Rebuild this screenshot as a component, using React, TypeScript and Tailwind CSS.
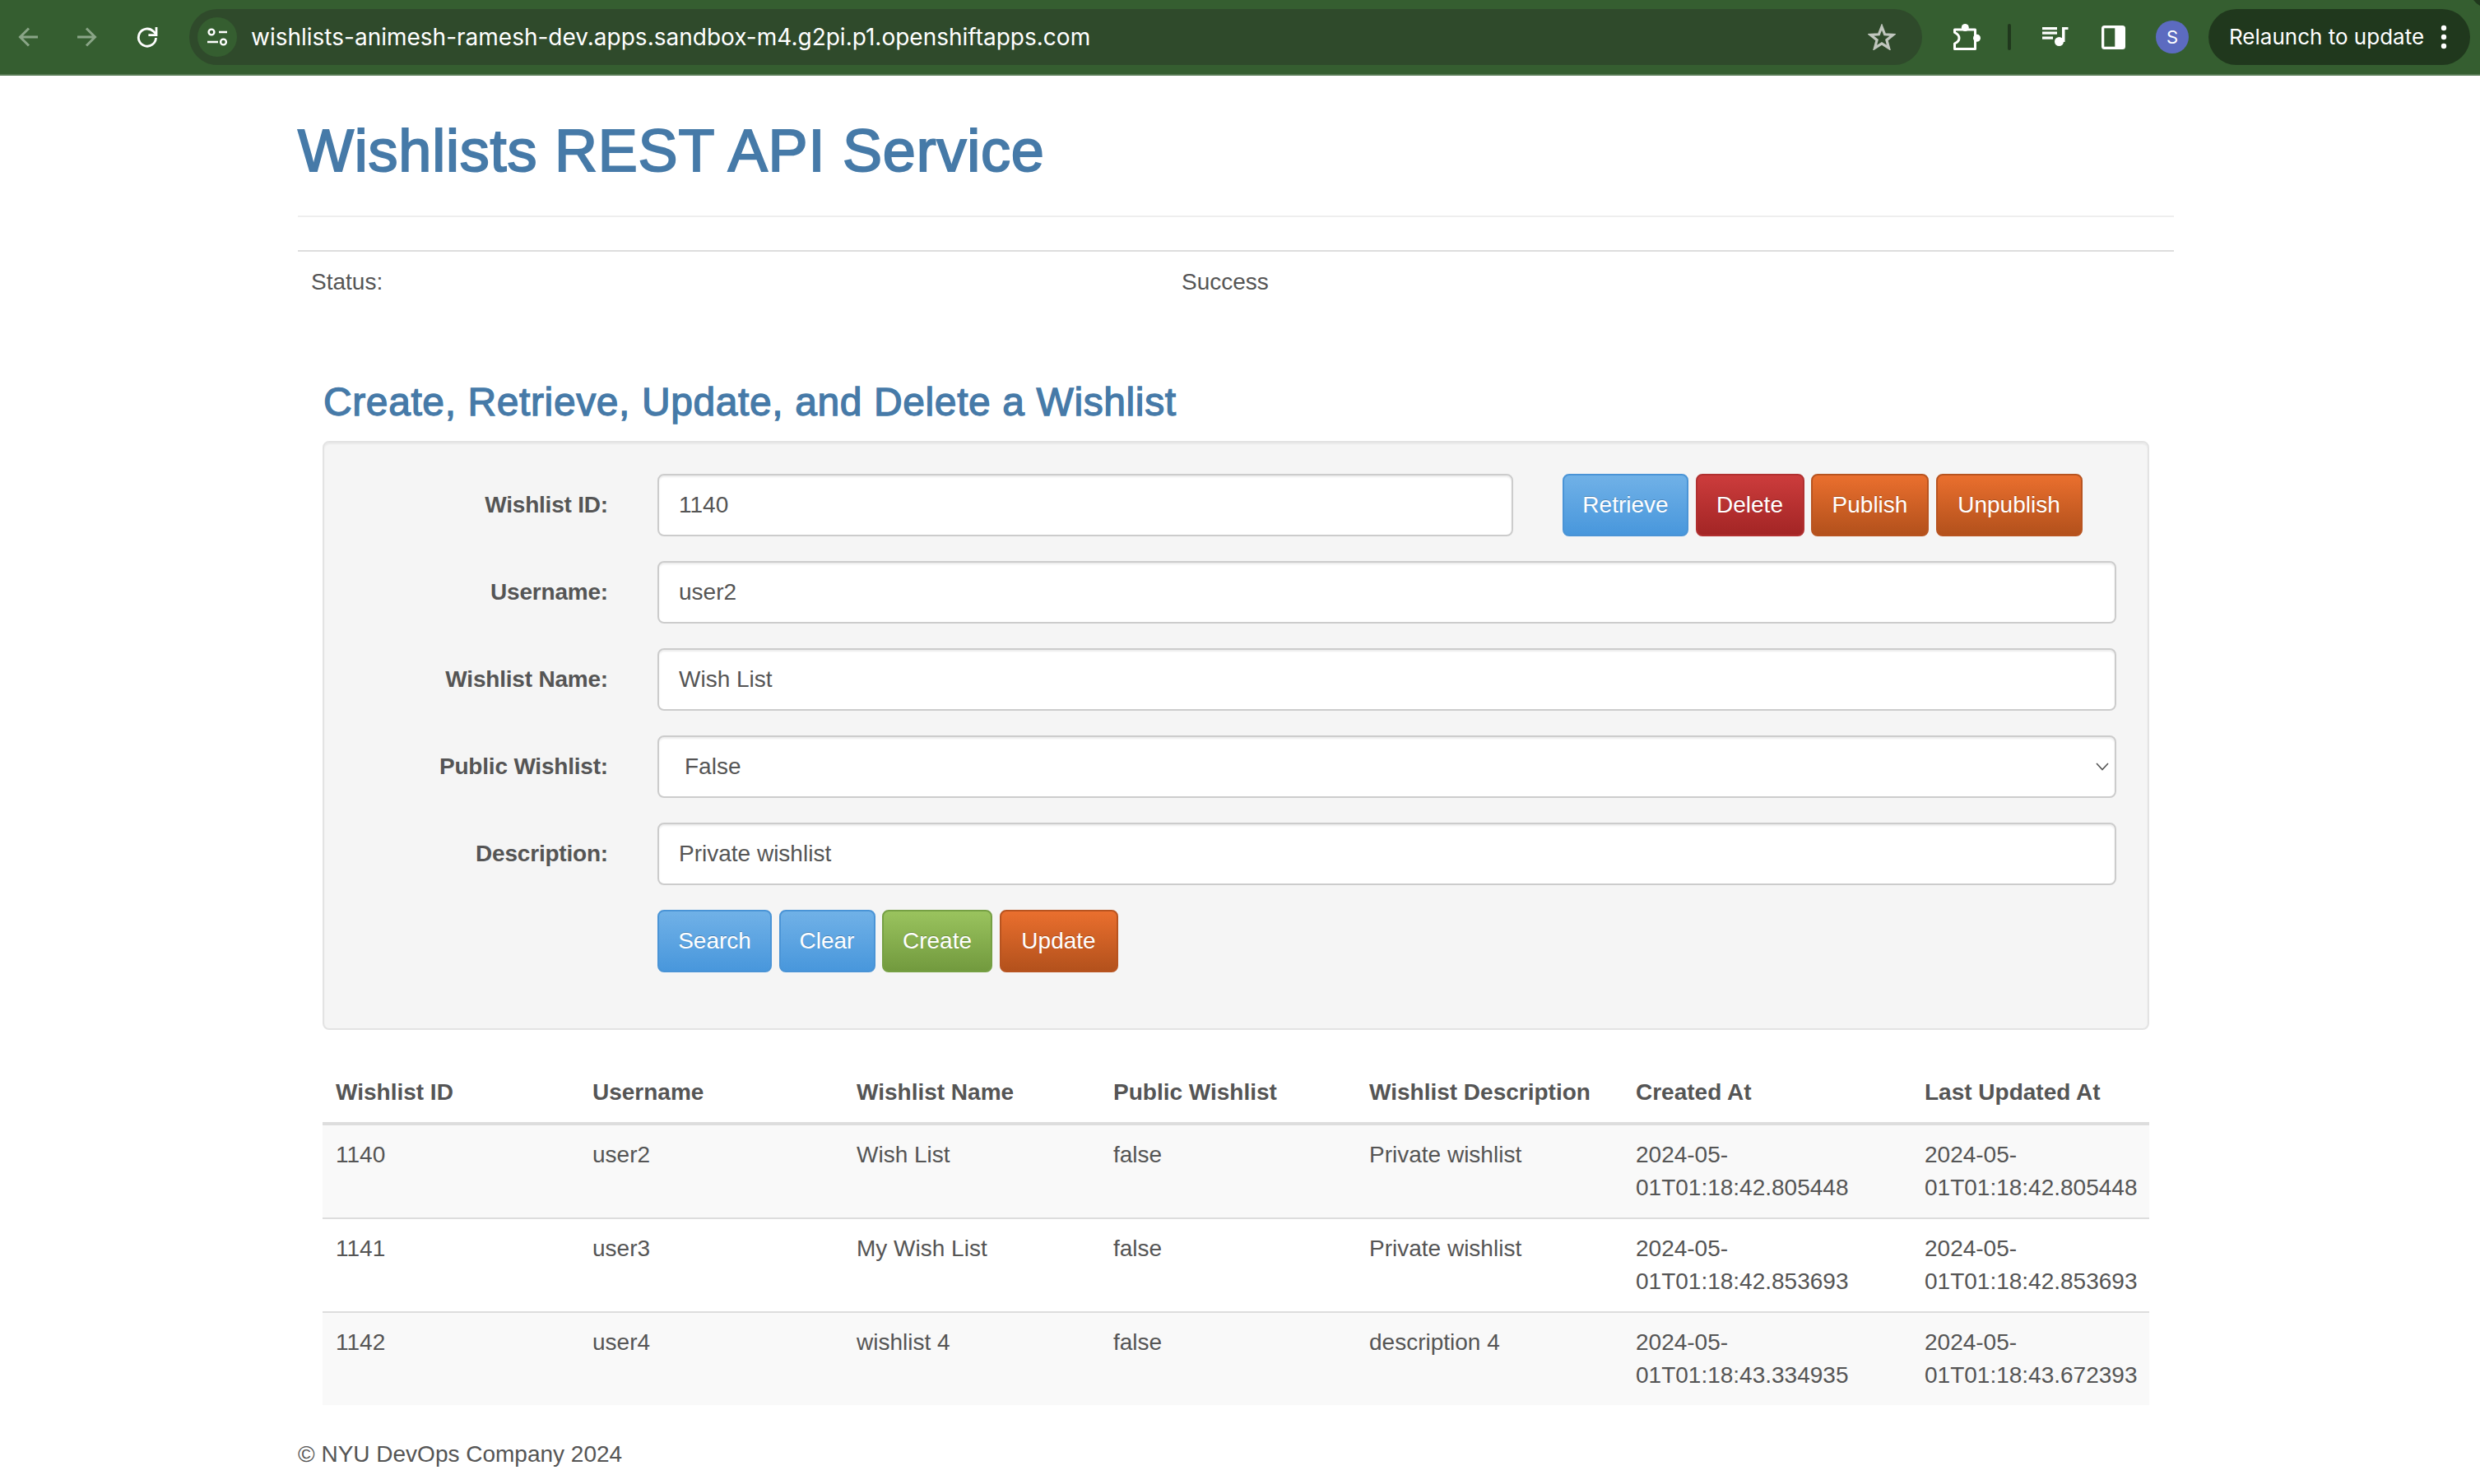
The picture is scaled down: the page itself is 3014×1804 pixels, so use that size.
import React from "react";

const sans = "[font-family:'Liberation_Sans',Arial,sans-serif]";

function Toolbar() {
  return (
    <div className="relative flex h-[92px] items-center border-b-2 border-[#587b55] bg-[#355e30] [font-family:Inter,sans-serif]">
      <div className="flex w-[230px] items-center gap-[48px] pl-[22px]">
        <svg width="24" height="24" viewBox="0 0 24 24" fill="none" stroke="#8aa587" strokeWidth="3"><path d="M24 12H3M13 1.5 2.5 12 13 22.5" /></svg>
        <svg width="24" height="24" viewBox="0 0 24 24" fill="none" stroke="#8aa587" strokeWidth="3"><path d="M0 12h21M11 1.5 21.5 12 11 22.5" /></svg>
        <svg width="26" height="26" viewBox="0 0 26 26" fill="none" stroke="#ffffff" strokeWidth="2.8"><path d="M23.5 14a10.6 10.6 0 1 1-3.2-8l3.7 3.6" /><path d="M24 1v9.6h-9.6" /></svg>
      </div>
      <div className="flex h-[68px] w-[2106px] items-center rounded-full bg-[#2f4a2b] pl-[10px]">
        <div className="flex h-[48px] w-[48px] items-center justify-center rounded-full bg-[#355e30]">
          <svg width="26" height="24" viewBox="0 0 26 24" fill="none" stroke="#ffffff" strokeWidth="2.4"><circle cx="6" cy="6" r="3.4" /><path d="M15 6h10M1 18h13" /><circle cx="20.5" cy="18" r="3.4" /></svg>
        </div>
        <span className="ml-[17px] flex-1 text-[28px] text-white">wishlists-animesh-ramesh-dev.apps.sandbox-m4.g2pi.p1.openshiftapps.com</span>
        <svg width="34" height="32" viewBox="0 0 34 32" fill="none" stroke="#c0c6be" strokeWidth="3.2" className="mr-[32px]"><path d="M17 3.5l3.6 9.3 10 .6-7.7 6.3 2.6 9.7L17 24l-8.500 5.400 2.600-9.700-7.700-6.300 10-.6z" /></svg>
      </div>
      <svg width="34" height="32" viewBox="0 0 34 32" fill="none" stroke="#ffffff" strokeWidth="3" strokeLinejoin="round" className="ml-[37px]">
        <path d="M2.500 7H27.500V30.500H2.500V24Q8 21.500 8 17.300Q8 13 2.500 10.500Z" />
        <circle cx="15.300" cy="4.500" r="4.500" fill="#ffffff" stroke="none" />
        <circle cx="29.500" cy="17.300" r="4.500" fill="#ffffff" stroke="none" />
      </svg>
      <div className="ml-[33px] h-[32px] w-[4px] rounded-full bg-[#20381d]" />
      <svg width="32" height="28" viewBox="0 0 32 28" fill="#ffffff" className="ml-[38px]">
        <rect x="0" y="2" width="18" height="3.200" />
        <rect x="0" y="7.500" width="18" height="3.200" />
        <rect x="0" y="13.500" width="13" height="3.200" />
        <rect x="24" y="2" width="3.500" height="18" />
        <rect x="24" y="2" width="7.500" height="3" />
        <circle cx="20.500" cy="19.500" r="5.500" />
      </svg>
      <svg width="29" height="29" viewBox="0 0 29 29" className="ml-[40px]">
        <rect width="29" height="29" rx="3.500" fill="#ffffff" />
        <rect x="3.300" y="3.300" width="13" height="22.400" fill="#355e30" />
      </svg>
      <div className="ml-[37px] flex h-[40px] w-[40px] items-center justify-center rounded-full bg-[#5c6bc0] text-[22px] text-white">S</div>
      <div className="ml-[24px] flex h-[68px] w-[318px] items-center rounded-full bg-[#20381d] pl-[25px] text-[26px] text-white">
        <span className="w-[236px] whitespace-nowrap">Relaunch to update</span>
        <svg width="8" height="30" viewBox="0 0 8 30" fill="#ffffff" className="ml-[21px]"><circle cx="4" cy="4" r="3.200" /><circle cx="4" cy="15" r="3.200" /><circle cx="4" cy="26" r="3.200" /></svg>
      </div>
      <svg width="8" height="8" viewBox="0 0 8 8" fill="#20381d" className="absolute right-0 top-0"><path d="M0 0H8V7Q3 4 0 0Z" /></svg>
    </div>
  );
}

function Btn({ label, cls }: { label: string; cls: string }) {
  return (
    <button className={`h-[76px] rounded-lg border-2 text-[28px] text-white [text-shadow:0_-1px_0_rgba(0,0,0,0.2)] ${cls}`}>{label}</button>
  );
}

const blue = "border-[#4a94d6] bg-gradient-to-b from-[#70b1e7] to-[#4897dc]";
const red = "border-[#b13030] bg-gradient-to-b from-[#cc3c3c] to-[#a32525]";
const orange = "border-[#b85420] bg-gradient-to-b from-[#ea6f2e] to-[#b3511c]";
const green = "border-[#76a044] bg-gradient-to-b from-[#9ac35e] to-[#729a3e]";
const field = "h-[76px] rounded-lg border-2 border-[#cccccc] bg-white pl-[24px] text-[28px] text-[#555555] shadow-[inset_0_2px_2px_rgba(0,0,0,0.075)] outline-none";

function Row({ label, children }: { label: string; children: React.ReactNode }) {
  return (
    <div className="mb-[30px] flex items-center">
      <label className="mr-[60px] w-[307px] text-right font-bold tracking-[-0.2px]">{label}</label>
      {children}
    </div>
  );
}

const rows = [
  ["1140", "user2", "Wish List", "false", "Private wishlist", "2024-05-01T01:18:42.805448", "2024-05-01T01:18:42.805448"],
  ["1141", "user3", "My Wish List", "false", "Private wishlist", "2024-05-01T01:18:42.853693", "2024-05-01T01:18:42.853693"],
  ["1142", "user4", "wishlist 4", "false", "description 4", "2024-05-01T01:18:43.334935", "2024-05-01T01:18:43.672393"],
];
const heads: [string, string][] = [
  ["Wishlist ID", "w-[312px]"],
  ["Username", "w-[321px]"],
  ["Wishlist Name", "w-[312px]"],
  ["Public Wishlist", "w-[311px]"],
  ["Wishlist Description", "w-[324px]"],
  ["Created At", "w-[351px]"],
  ["Last Updated At", "w-[289px]"],
];

export default function App() {
  return (
    <div className={`${sans} h-[1804px] overflow-hidden bg-white text-[28px] leading-[40px] text-[#555555]`}>
      <Toolbar />
      <div className="ml-[362px] w-[2280px]">
        <div className="border-b-2 border-[#eeeeee] pb-[39px] pt-[52px]">
          <h1 className="text-[72px] leading-[79px] tracking-[0.8px] text-[#467aa8] [-webkit-text-stroke:2px_#467aa8]">Wishlists REST API Service</h1>
        </div>
        <div className="mt-[40px] flex border-t-2 border-[#dddddd] px-[16px] pt-[17px]">
          <div className="w-[1058px]">Status:</div>
          <div>Success</div>
        </div>
        <div className="mx-[30px]">
          <h3 className="mb-[21px] mt-[99px] pl-[1px] text-[48px] leading-[53px] tracking-[0.6px] text-[#467aa8] [-webkit-text-stroke:1.3px_#467aa8]">Create, Retrieve, Update, and Delete a Wishlist</h3>
          <div className="h-[716px] rounded-lg border-2 border-[#e3e3e3] bg-[#f5f5f5] pl-[38px] pt-[38px] shadow-[inset_0_2px_2px_rgba(0,0,0,0.05)]">
            <Row label="Wishlist ID:">
              <input defaultValue="1140" className={`${field} w-[1040px]`} />
              <div className="ml-[60px] flex gap-[8.5px]">
                <Btn label="Retrieve" cls={`${blue} w-[153px]`} />
                <Btn label="Delete" cls={`${red} w-[132px]`} />
                <Btn label="Publish" cls={`${orange} w-[143px]`} />
                <Btn label="Unpublish" cls={`${orange} w-[178px]`} />
              </div>
            </Row>
            <Row label="Username:">
              <input defaultValue="user2" className={`${field} w-[1773px]`} />
            </Row>
            <Row label="Wishlist Name:">
              <input defaultValue="Wish List" className={`${field} w-[1773px]`} />
            </Row>
            <Row label="Public Wishlist:">
              <div className="relative h-[76px] w-[1773px]">
                <select defaultValue="False" className={`${field} w-full appearance-none pl-[31px]`}>
                  <option>False</option>
                  <option>True</option>
                </select>
                <svg width="16" height="10" viewBox="0 0 16 10" fill="none" stroke="#555555" strokeWidth="1.6" className="absolute right-[9px] top-[33px]"><path d="m1 1 7 7.500 7-7.500" /></svg>
              </div>
            </Row>
            <Row label="Description:">
              <input defaultValue="Private wishlist" className={`${field} w-[1773px]`} />
            </Row>
            <div className="ml-[367px] flex gap-[8.5px]">
              <Btn label="Search" cls={`${blue} w-[139px]`} />
              <Btn label="Clear" cls={`${blue} w-[117px]`} />
              <Btn label="Create" cls={`${green} w-[134px]`} />
              <Btn label="Update" cls={`${orange} w-[144px]`} />
            </div>
          </div>
          <table className="mt-[40px] w-[2220px] table-fixed border-collapse">
            <thead>
              <tr className="border-b-4 border-[#dddddd]">
                {heads.map(([h, w]) => (
                  <th key={h} className={`${w} p-[16px] text-left font-bold`}>{h}</th>
                ))}
              </tr>
            </thead>
            <tbody>
              {rows.map((r, i) => (
                <tr key={r[0]} className={`${i === 1 ? "bg-white" : "bg-[#f9f9f9]"} ${i < 2 ? "border-b-2 border-[#dddddd]" : ""}`}>
                  {r.map((c, j) => (
                    <td key={j} className="h-[112px] p-[16px] align-top">{c}</td>
                  ))}
                </tr>
              ))}
            </tbody>
          </table>
        </div>
        <div className="mt-[40px]">© NYU DevOps Company 2024</div>
      </div>
    </div>
  );
}
